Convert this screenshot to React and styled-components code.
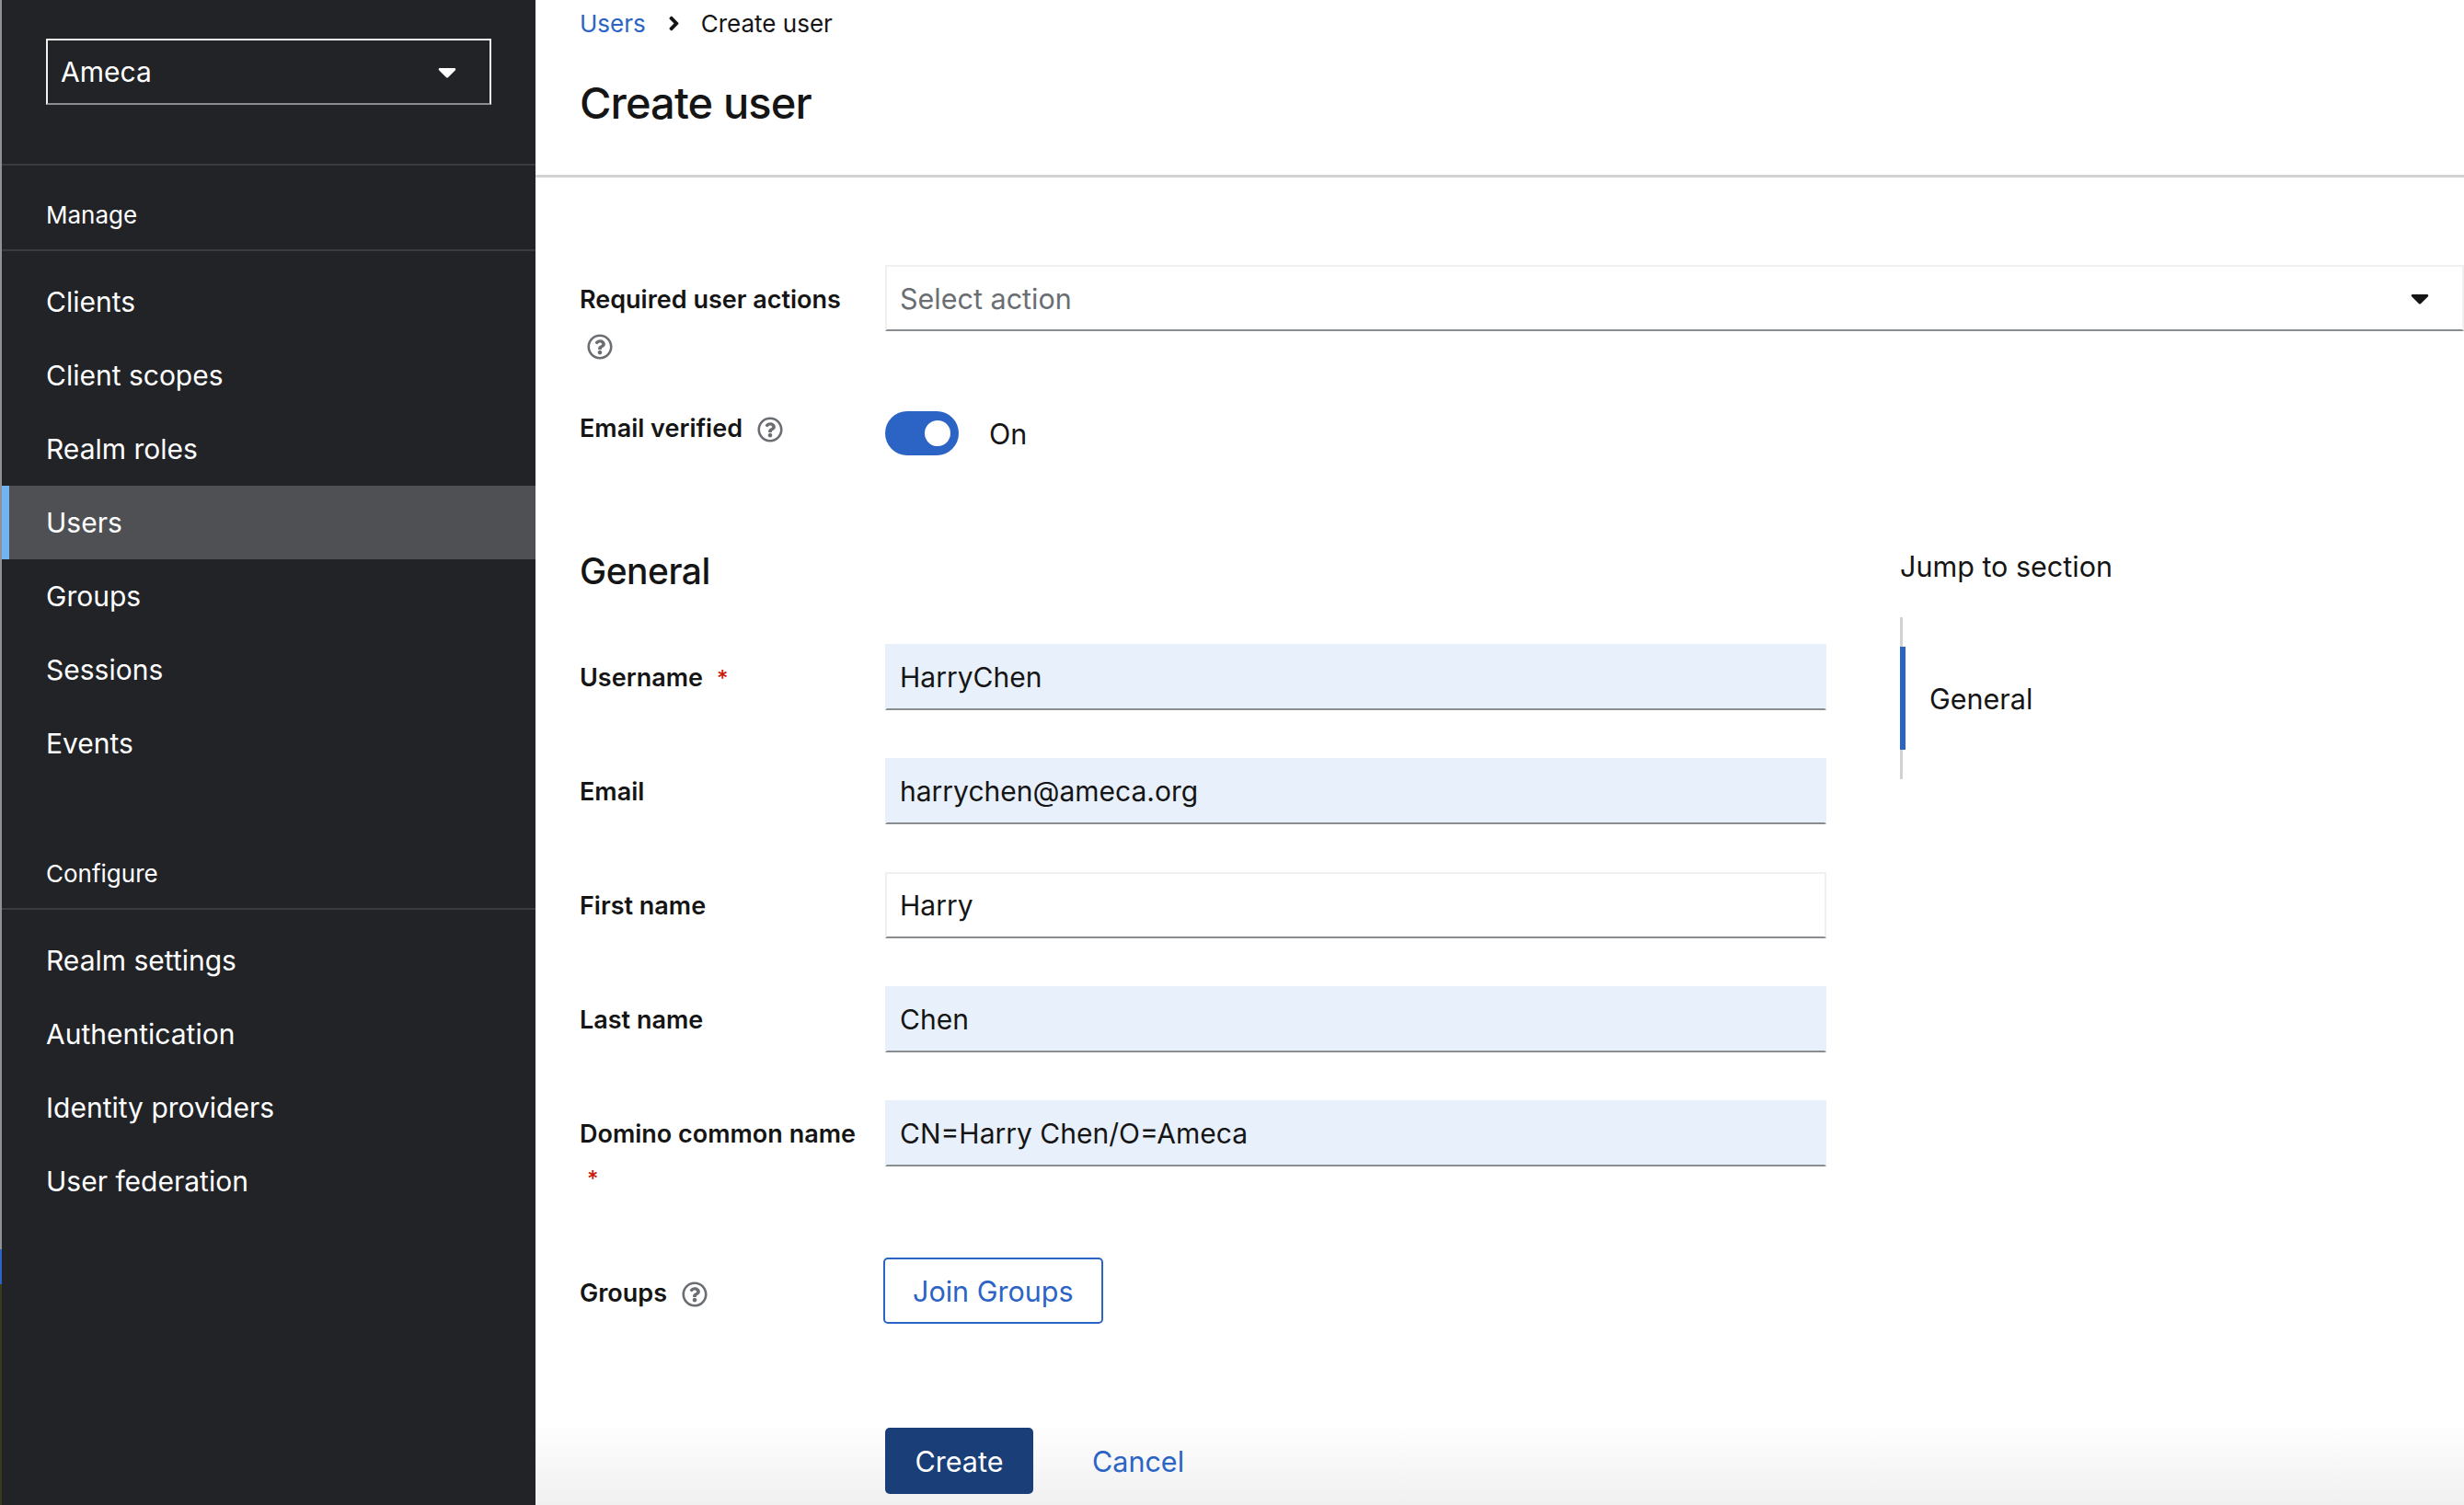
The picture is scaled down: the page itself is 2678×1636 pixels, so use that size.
import React from 'react';
import styled, { createGlobalStyle } from 'styled-components';
import { FaCaretDown, FaAngleRight, FaRegQuestionCircle } from 'react-icons/fa';

const GlobalStyle = createGlobalStyle`
    html, body { margin: 0; padding: 0; background: #fff; }
    body { font-family: Inter, "Liberation Sans", sans-serif; color: #151515; }
`;

const Page = styled.div`
    display: flex;
    width: 2678px;
    height: 1636px;
    overflow: hidden;
`;
const DesktopEdge = styled.div`
    display: flex;
    flex-direction: column;
    width: 2px;
    flex: none;
`;
const EdgePart = styled.div`
    height: ${(props) => props.h || 'auto'};
    flex: ${(props) => (props.h ? 'none' : 1)};
    background: ${(props) => props.color};
`;
const Sidebar = styled.nav`
    width: 580px;
    flex: none;
    background: #222327;
    color: #fff;
`;
const RealmArea = styled.div`
    height: 180px;
    padding: 42px 48px 0;
    box-sizing: border-box;
    border-bottom: 2px solid #3a3b3f;
`;
const RealmSelect = styled.div`
    display: flex;
    align-items: center;
    justify-content: space-between;
    width: 484px;
    height: 72px;
    box-sizing: border-box;
    padding: 0 30px 0 14px;
    border: 2px solid #f0f0f0;
    border-bottom-color: #8a8d90;
    font-size: 30px;
`;
const GroupTitle = styled.div`
    display: flex;
    align-items: center;
    height: 93px;
    margin-top: ${(props) => props.top || 0}px;
    padding: 16px 48px 0;
    box-sizing: border-box;
    font-size: 26px;
    border-bottom: 2px solid #3a3b3f;
`;
const NavList = styled.div`
    display: flex;
    flex-direction: column;
    padding-top: 15px;
`;
const NavItem = styled.div`
    display: flex;
    align-items: center;
    height: 80px;
    padding-left: 48px;
    font-size: 30px;
    background: ${(props) => (props.active ? '#4f5054' : 'transparent')};
    box-shadow: ${(props) => (props.active ? 'inset 8px 0 0 #73b4f0' : 'none')};
`;
const Main = styled.main`
    flex: 1;
    min-width: 0;
    background: linear-gradient(#fff calc(100% - 90px), #f0f0f0);
`;
const Header = styled.header`
    height: 193px;
    box-sizing: border-box;
    padding-left: 48px;
    border-bottom: 3px solid #d2d2d2;
`;
const Breadcrumb = styled.div`
    display: flex;
    align-items: center;
    height: 50px;
    font-size: 26px;
`;
const LinkText = styled.span`
    color: #2b64c5;
`;
const Crumb = styled.span`
    display: flex;
    margin: 0 17px 0 18px;
    font-size: 25px;
`;
const Title = styled.h1`
    margin: 26px 0 0;
    font-size: 47px;
    line-height: 72px;
    font-weight: 500;
    letter-spacing: -0.9px;
`;
const Top = styled.div`
    padding: 95px 0 0 48px;
`;
const Row = styled.div`
    display: grid;
    grid-template-columns: 332px 1fr;
    min-height: ${(props) => props.h}px;
    margin-bottom: ${(props) => props.gap || 0}px;
`;
const Label = styled.div`
    font-size: 27px;
    line-height: 40px;
    font-weight: 600;
    padding-top: ${(props) => props.top || 0}px;
    margin-top: ${(props) => props.shift || 0}px;
`;
const HelpIcon = styled(FaRegQuestionCircle)`
    display: ${(props) => (props.block ? 'block' : 'inline-block')};
    width: 28px;
    height: 28px;
    margin: ${(props) => (props.block ? '17px 0 0 8px' : '0 0 -6px 16px')};
    color: #6a6e73;
`;
const Required = styled.span`
    color: #c9190b;
    font-size: 24px;
    font-weight: 500;
    display: ${(props) => (props.block ? 'block' : 'inline')};
    margin: ${(props) => (props.block ? '9px 0 0 8px' : '0 0 0 15px')};
`;
const SelectBox = styled.div`
    display: flex;
    align-items: center;
    justify-content: space-between;
    height: 72px;
    box-sizing: border-box;
    padding: 0 30px 0 14px;
    border: 2px solid #f0f0f0;
    border-bottom-color: #8a8d90;
    font-size: 30.5px;
    color: #6a6e73;
`;
const Caret = styled(FaCaretDown)`
    color: #151515;
    font-size: 32px;
`;
const ToggleRow = styled.div`
    display: flex;
    align-items: center;
    height: 48px;
    gap: 33px;
    font-size: 30.5px;
`;
const Switch = styled.div`
    display: flex;
    align-items: center;
    justify-content: flex-end;
    width: 80px;
    height: 48px;
    box-sizing: border-box;
    padding-right: 9px;
    border-radius: 24px;
    background: #2b64c5;
`;
const Knob = styled.div`
    width: 28px;
    height: 28px;
    border-radius: 50%;
    background: #fff;
`;
const Columns = styled.div`
    display: grid;
    grid-template-columns: 1355px 1fr;
    column-gap: 80px;
    padding: 0 0 0 48px;
`;
const SectionTitle = styled.h2`
    margin: 98px 0 51px;
    font-size: 39px;
    line-height: 56px;
    font-weight: 500;
    letter-spacing: -0.5px;
`;
const Field = styled.div`
    display: flex;
    align-items: center;
    height: 72px;
    box-sizing: border-box;
    padding-left: 14px;
    font-size: 30px;
    background: ${(props) => (props.filled ? '#e8f0fb' : '#fff')};
    border: 2px solid ${(props) => (props.filled ? '#e8f0fb' : '#f0f0f0')};
    border-bottom-color: #8a8d90;
`;
const OutlineButton = styled.div`
    display: inline-flex;
    align-items: center;
    height: 72px;
    box-sizing: border-box;
    margin-left: -2px;
    padding: 0 30px;
    border: 2px solid #2b64c5;
    border-radius: 5px;
    color: #2b64c5;
    font-size: 30.5px;
`;
const Actions = styled.div`
    display: flex;
    align-items: center;
    padding-left: 332px;
    gap: 64px;
    margin-top: 113px;
`;
const PrimaryButton = styled.div`
    display: flex;
    align-items: center;
    justify-content: center;
    width: 161px;
    height: 72px;
    border-radius: 5px;
    background: #1a3e78;
    color: #fff;
    font-size: 30.5px;
`;
const CancelLink = styled(LinkText)`
    font-size: 30.5px;
`;
const JumpLinks = styled.aside`
    padding-top: 101px;
`;
const JumpTitle = styled.div`
    font-size: 30.5px;
    line-height: 40px;
`;
const JumpRail = styled.div`
    margin-top: 35px;
    padding: 32px 0;
    border-left: 3px solid #d2d2d2;
`;
const JumpItem = styled.div`
    display: flex;
    align-items: center;
    height: 112px;
    margin-left: -3px;
    padding-left: 26px;
    border-left: 6px solid #2b64c5;
    font-size: 30.5px;
`;

const manageItems = ['Clients', 'Client scopes', 'Realm roles', 'Users', 'Groups', 'Sessions', 'Events'];
const configureItems = ['Realm settings', 'Authentication', 'Identity providers', 'User federation'];

const App = () => {
    return (
        <Page>
            <GlobalStyle />
            <DesktopEdge>
                <EdgePart h="1358px" color="#8f9194" />
                <EdgePart h="38px" color="#2b64c5" />
                <EdgePart color="#3b3a1e" />
            </DesktopEdge>
            <Sidebar>
                <RealmArea>
                    <RealmSelect>Ameca<FaCaretDown size={32} /></RealmSelect>
                </RealmArea>
                <GroupTitle>Manage</GroupTitle>
                <NavList>
                    {manageItems.map((item) => (
                        <NavItem key={item} active={item === 'Users'}>{item}</NavItem>
                    ))}
                </NavList>
                <GroupTitle top={48}>Configure</GroupTitle>
                <NavList>
                    {configureItems.map((item) => (
                        <NavItem key={item}>{item}</NavItem>
                    ))}
                </NavList>
            </Sidebar>
            <Main>
                <Header>
                    <Breadcrumb>
                        <LinkText>Users</LinkText>
                        <Crumb><FaAngleRight /></Crumb>
                        <span>Create user</span>
                    </Breadcrumb>
                    <Title>Create user</Title>
                </Header>
                <Top>
                    <Row h={159}>
                        <Label top={18}>
                            Required user actions
                            <HelpIcon block="true" />
                        </Label>
                        <SelectBox>Select action<Caret /></SelectBox>
                    </Row>
                    <Row h={48}>
                        <Label shift={-1}>Email verified<HelpIcon /></Label>
                        <ToggleRow>
                            <Switch><Knob /></Switch>
                            On
                        </ToggleRow>
                    </Row>
                </Top>
                <Columns>
                    <div>
                        <SectionTitle>General</SectionTitle>
                        <Row h={72} gap={52}>
                            <Label top={17}>Username<Required>*</Required></Label>
                            <Field filled>HarryChen</Field>
                        </Row>
                        <Row h={72} gap={52}>
                            <Label top={17}>Email</Label>
                            <Field filled>harrychen@ameca.org</Field>
                        </Row>
                        <Row h={72} gap={52}>
                            <Label top={17}>First name</Label>
                            <Field>Harry</Field>
                        </Row>
                        <Row h={72} gap={52}>
                            <Label top={17}>Last name</Label>
                            <Field filled>Chen</Field>
                        </Row>
                        <Row h={72} gap={65}>
                            <Label top={17}>
                                Domino common name
                                <Required block="true">*</Required>
                            </Label>
                            <Field filled>CN=Harry Chen/O=Ameca</Field>
                        </Row>
                        <Row h={72}>
                            <Label top={19}>Groups<HelpIcon /></Label>
                            <div><OutlineButton>Join Groups</OutlineButton></div>
                        </Row>
                        <Actions>
                            <PrimaryButton>Create</PrimaryButton>
                            <CancelLink>Cancel</CancelLink>
                        </Actions>
                    </div>
                    <JumpLinks>
                        <JumpTitle>Jump to section</JumpTitle>
                        <JumpRail>
                            <JumpItem>General</JumpItem>
                        </JumpRail>
                    </JumpLinks>
                </Columns>
            </Main>
        </Page>
    );
};

export default App;
